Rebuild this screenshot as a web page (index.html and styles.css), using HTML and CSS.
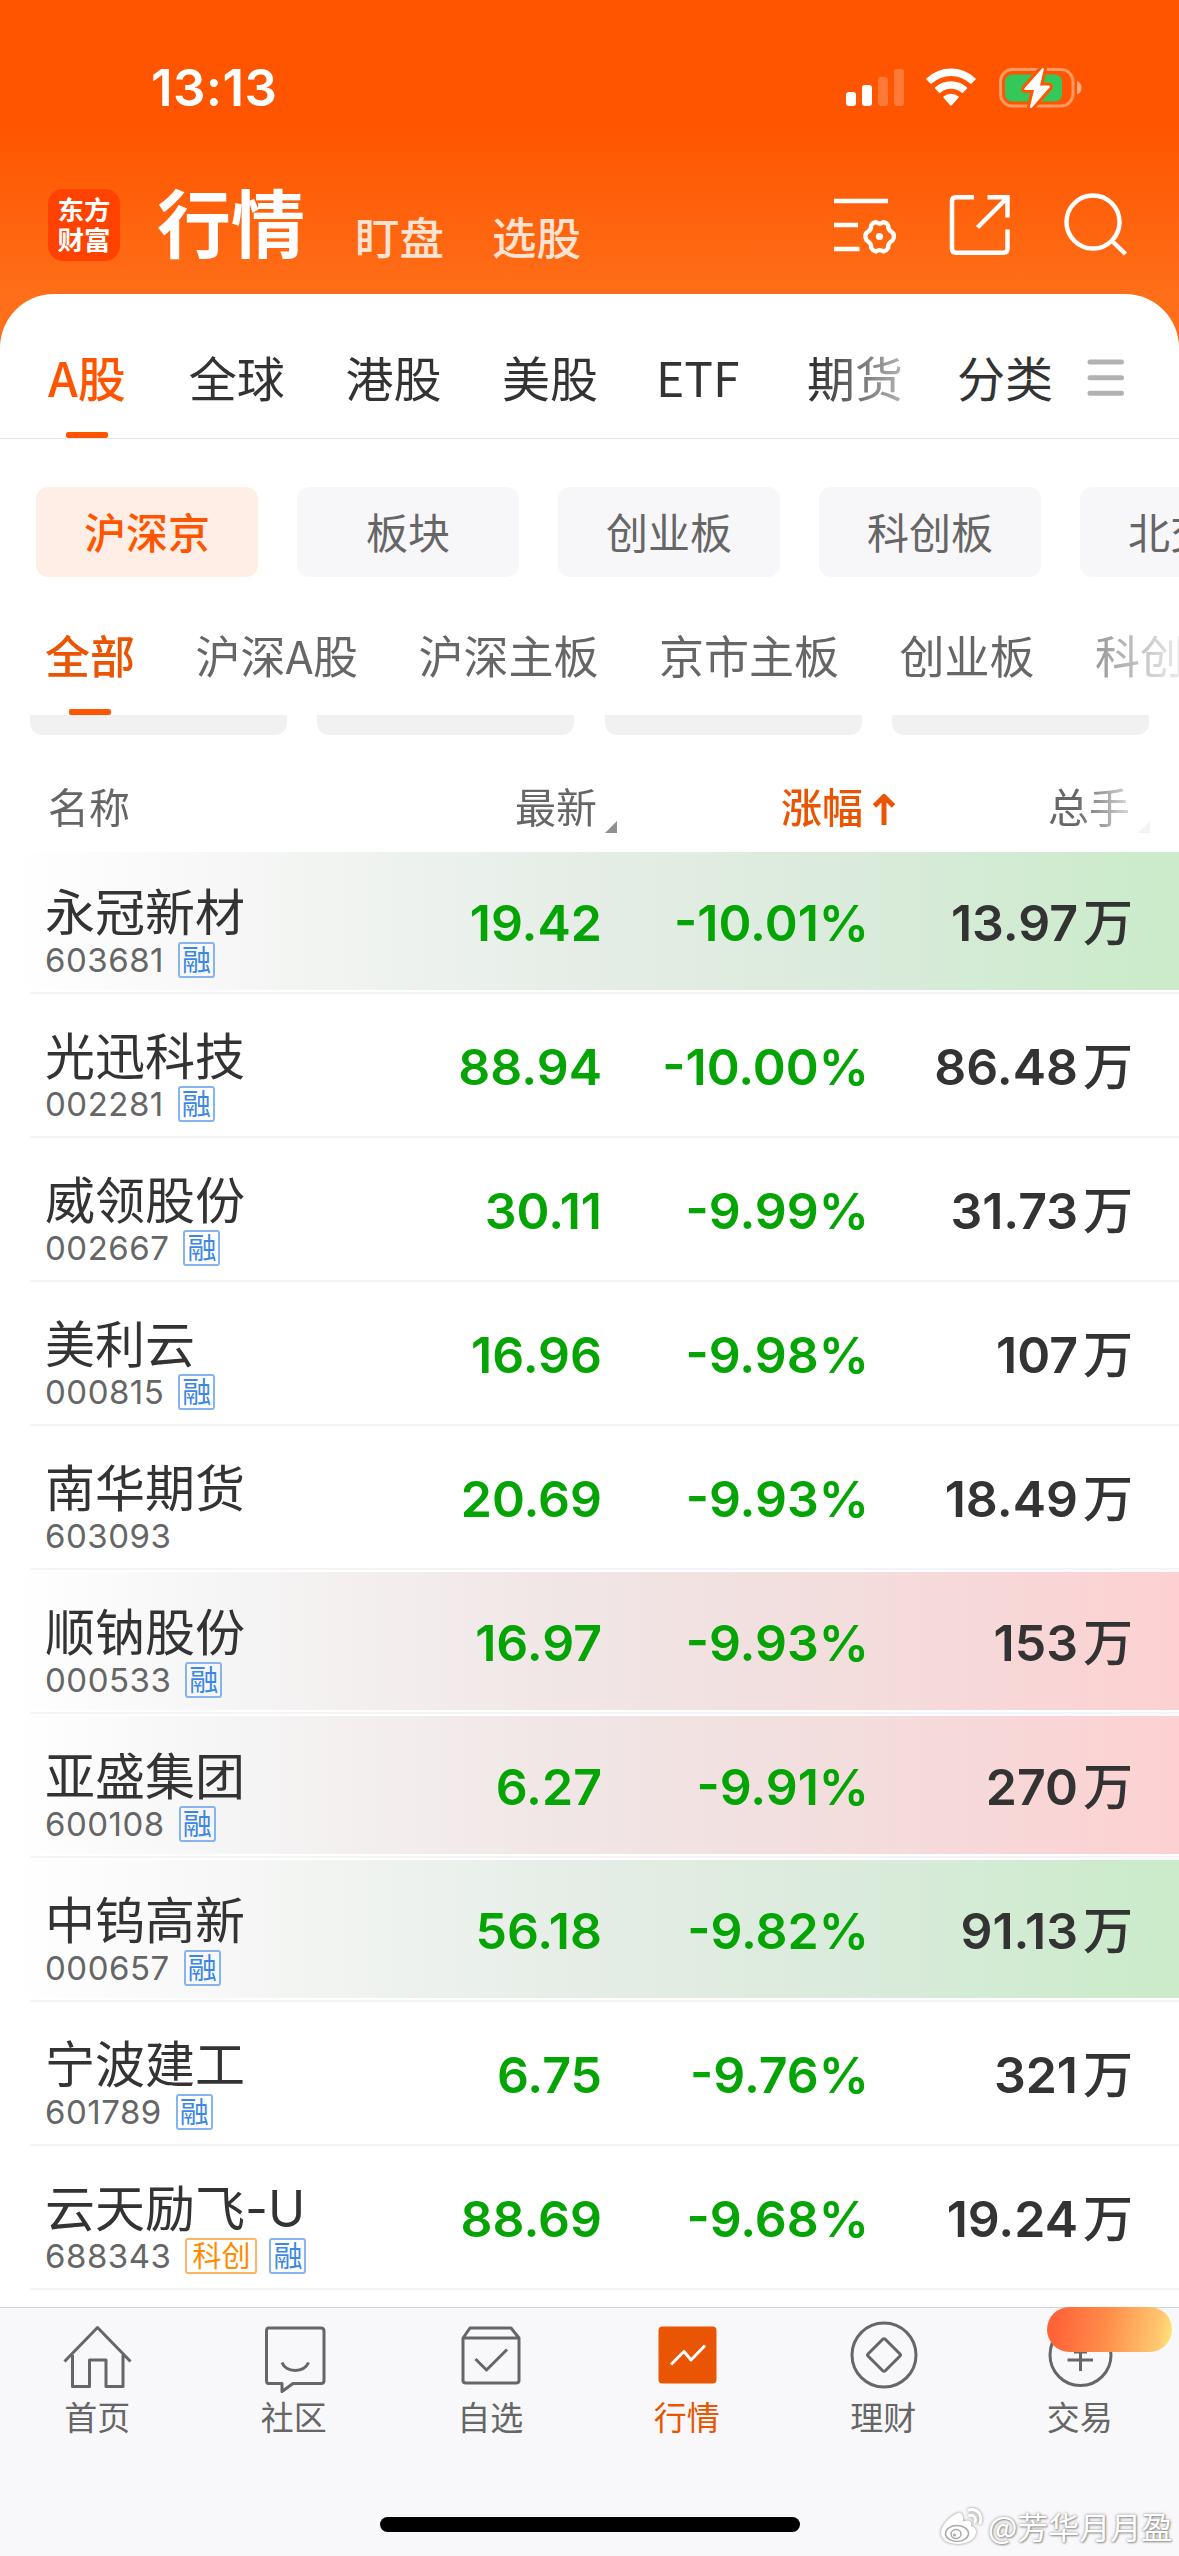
FILE: index.html
```html
<!DOCTYPE html>
<html lang="zh-CN">
<head>
<meta charset="utf-8">
<title>行情</title>
<link rel="stylesheet" href="styles.css">
</head>
<body>
<div class="app">
  <header class="top">
    <div class="status">
      <span class="time">13:13</span>
      <svg class="signal" width="60" height="40" viewBox="0 0 60 40" fill="#fff">
        <rect x="1" y="24" width="10" height="14" rx="3"/>
        <rect x="17" y="17" width="10" height="21" rx="3"/>
        <rect x="33" y="9" width="10" height="29" rx="3" opacity=".22"/>
        <rect x="49" y="1" width="10" height="37" rx="3" opacity=".22"/>
      </svg>
      <svg class="wifi" width="52" height="40" viewBox="0 0 52 40" fill="#fff">
        <path d="M1.500 11.500Q1 10.800 1.700 10.200A35.500 35.500 0 0 1 50.300 10.200Q51 10.800 50.500 11.500L46.600 15.500Q46 16 45.300 15.500A28.500 28.500 0 0 0 6.700 15.500Q6 16 5.400 15.500Z"/>
        <path d="M10 20.500Q9.500 20 10.200 19.300A23.500 23.500 0 0 1 41.800 19.300Q42.500 20 42 20.500L38 24.800Q37.300 25.300 36.700 24.800A16.500 16.500 0 0 0 15.300 24.800Q14.700 25.300 14 24.800Z"/>
        <path d="M18.300 29.500Q17.800 29 18.500 28.400A12 12 0 0 1 33.500 28.400Q34.200 29 33.700 29.500L26.800 37.200Q26 38 25.200 37.200Z"/>
      </svg>
      <svg class="battery" width="84" height="44" viewBox="0 0 84 44">
        <rect x="1.500" y="3.500" width="72.500" height="36.500" rx="12" fill="none" stroke="#fff" stroke-opacity=".4" stroke-width="3"/>
        <path d="M78 15v13.500c3-1 4.500-3.500 4.500-6.700S81 16 78 15Z" fill="#fff" fill-opacity=".5"/>
        <rect x="6" y="8.500" width="57" height="27" rx="7" fill="#34c759"/>
        <path d="M43 2.500L25.500 22.300Q24.500 24 26.500 24H35L31 40.500Q31 43 33 41.500L50.500 21.500Q51.500 19.500 49.500 19.500H41L44.800 3.500Q44.800 1 43 2.500Z" fill="#fff" stroke="#ff5602" stroke-width="6" paint-order="stroke"/>
      </svg>
    </div>
    <div class="titlebar">
      <div class="logo"><span>东方</span><span>财富</span></div>
      <h1 class="title">行情</h1>
      <span class="subtitle">盯盘</span>
      <span class="subtitle">选股</span>
      <div class="tools">
        <svg width="66" height="64" viewBox="0 0 66 64" fill="none" stroke="#fff" stroke-width="4.500">
          <path d="M2 8H56M2 32H26M2 56H27.500"/>
          <path d="M43 28.500Q47 31.500 51 28.500Q54.500 29 56 32Q55.500 36.500 59.500 38.800Q62.500 40.500 62 44Q61.500 48 59 49Q55.500 51.500 56 55.500Q54.500 58.500 51 59.500Q47 56.500 43 59.500Q39.500 58.500 38 55.500Q38.500 51.500 35 49Q32.500 48 32 44Q31.500 40.500 34.500 38.800Q38.500 36.500 38 32Q39.500 29 43 28.500Z" transform="translate(3 2) scale(.95)" stroke-linejoin="round"/>
          <circle cx="47.500" cy="43.500" r="3.600" fill="#fff" stroke="none"/>
        </svg>
        <svg width="66" height="64" viewBox="0 0 66 64" fill="none" stroke="#fff" stroke-width="4.500">
          <path d="M27 4.300H9Q5 4.300 5 8.300V55.700Q5 59.700 9 59.700H56.500Q60.500 59.700 60.500 55.700V36.500"/>
          <path d="M40.500 4.300H60.500V24.500M60 5L30.500 34.500"/>
        </svg>
        <svg width="66" height="64" viewBox="0 0 66 64" fill="none" stroke="#fff" stroke-width="4.500">
          <circle cx="31" cy="29" r="26.500"/>
          <path d="M50 48L63.500 61"/>
        </svg>
      </div>
    </div>
  </header>

  <main class="panel">
    <nav class="markets">
      <div class="market-scroll">
        <span class="market active">A股</span>
        <span class="market">全球</span>
        <span class="market">港股</span>
        <span class="market">美股</span>
        <span class="market latin">ETF</span>
        <span class="market">期货</span>
      </div>
      <span class="category">分类</span>
      <svg class="menu" width="38" height="40" viewBox="0 0 38 40" stroke="#b2b2b2" stroke-width="5" stroke-linecap="round"><path d="M3 4H34.500M3 19.700H34.500M3 35.300H34.500"/></svg>
    </nav>

    <div class="chips">
      <span class="chip active">沪深京</span>
      <span class="chip">板块</span>
      <span class="chip">创业板</span>
      <span class="chip">科创板</span>
      <span class="chip">北交所</span>
    </div>

    <nav class="boards">
      <span class="board active">全部</span>
      <span class="board">沪深A股</span>
      <span class="board">沪深主板</span>
      <span class="board">京市主板</span>
      <span class="board">创业板</span>
      <span class="board">科创板</span>
    </nav>

    <div class="cards"><i></i><i></i><i></i><i></i></div>

    <section class="quotes">
      <div class="cols head">
        <span class="h-name">名称</span>
        <span class="h-num">最新<svg class="tri" width="12" height="12" viewBox="0 0 12 12"><path d="M12 0V12H0Z" fill="#8e8e93"/></svg></span>
        <span class="h-num sorted">涨幅<svg class="arrow" width="22" height="32" viewBox="0 0 22 32" fill="none" stroke="#ea5504" stroke-width="5"><path d="M11 32V4M1.500 13L11 3.500L20.500 13" stroke-linejoin="round"/></svg></span>
        <span class="h-num last">总手<svg class="tri" width="12" height="12" viewBox="0 0 12 12"><path d="M12 0V12H0Z" fill="#8e8e93"/></svg></span>
      </div>

      <div class="row fall"><div class="cols">
        <div class="stock"><div class="name">永冠新材</div><div class="code">603681<b class="tag">融</b></div></div>
        <span class="num">19.42</span><span class="num">-10.01%</span><span class="vol">13.97<em>万</em></span>
      </div></div>
      <div class="row"><div class="cols">
        <div class="stock"><div class="name">光迅科技</div><div class="code">002281<b class="tag">融</b></div></div>
        <span class="num">88.94</span><span class="num">-10.00%</span><span class="vol">86.48<em>万</em></span>
      </div></div>
      <div class="row"><div class="cols">
        <div class="stock"><div class="name">威领股份</div><div class="code">002667<b class="tag">融</b></div></div>
        <span class="num">30.11</span><span class="num">-9.99%</span><span class="vol">31.73<em>万</em></span>
      </div></div>
      <div class="row"><div class="cols">
        <div class="stock"><div class="name">美利云</div><div class="code">000815<b class="tag">融</b></div></div>
        <span class="num">16.96</span><span class="num">-9.98%</span><span class="vol">107<em>万</em></span>
      </div></div>
      <div class="row"><div class="cols">
        <div class="stock"><div class="name">南华期货</div><div class="code">603093</div></div>
        <span class="num">20.69</span><span class="num">-9.93%</span><span class="vol">18.49<em>万</em></span>
      </div></div>
      <div class="row rise"><div class="cols">
        <div class="stock"><div class="name">顺钠股份</div><div class="code">000533<b class="tag">融</b></div></div>
        <span class="num">16.97</span><span class="num">-9.93%</span><span class="vol">153<em>万</em></span>
      </div></div>
      <div class="row rise"><div class="cols">
        <div class="stock"><div class="name">亚盛集团</div><div class="code">600108<b class="tag">融</b></div></div>
        <span class="num">6.27</span><span class="num">-9.91%</span><span class="vol">270<em>万</em></span>
      </div></div>
      <div class="row fall"><div class="cols">
        <div class="stock"><div class="name">中钨高新</div><div class="code">000657<b class="tag">融</b></div></div>
        <span class="num">56.18</span><span class="num">-9.82%</span><span class="vol">91.13<em>万</em></span>
      </div></div>
      <div class="row"><div class="cols">
        <div class="stock"><div class="name">宁波建工</div><div class="code">601789<b class="tag">融</b></div></div>
        <span class="num">6.75</span><span class="num">-9.76%</span><span class="vol">321<em>万</em></span>
      </div></div>
      <div class="row"><div class="cols">
        <div class="stock"><div class="name">云天励飞-U</div><div class="code">688343<b class="tag star">科创</b><b class="tag">融</b></div></div>
        <span class="num">88.69</span><span class="num">-9.68%</span><span class="vol">19.24<em>万</em></span>
      </div></div>
    </section>
  </main>

  <footer class="tabbar">
    <nav class="tabs">
      <a class="tab"><svg width="72" height="72" viewBox="0 0 72 72"><path d="M3.500 42.500L36.500 8.500L69.500 42.500M11.500 36V67.500H28.500V41H45V67.500H62V36"/></svg>首页</a>
      <a class="tab"><svg width="72" height="72" viewBox="0 0 72 72"><path d="M10.500 9H63Q66 9 66 12V61.500Q66 64.500 63 64.500H35L24 72.500V64.500H10.500Q8.500 64.500 8.500 61.500V12Q8.500 9 10.500 9Z"/><path d="M24 43.500C28 54 46 54 50.500 43.500"/></svg>社区</a>
      <a class="tab"><svg width="72" height="72" viewBox="0 0 72 72"><path d="M9 19L16 9H57L65 19V61.500Q65 64 62 64H12Q9 64 9 61.500ZM9 19H65M21.500 40L32.500 51L53 30.500"/></svg>自选</a>
      <a class="tab active"><svg width="72" height="72" viewBox="0 0 72 72"><rect class="fill" x="7.500" y="7.500" width="58" height="57" rx="4"/><path class="line" d="M20 45.500L33 32.500L40 41L54 26.500"/></svg>行情</a>
      <a class="tab"><svg width="72" height="72" viewBox="0 0 72 72"><circle cx="37" cy="36" r="32"/><path d="M35.500 20.500Q37 19 38.500 20.500L53 35Q54 36 53 37L38.500 51.500Q37 53 35.500 51.500L21 37Q20 36 21 35Z"/></svg>理财</a>
      <a class="tab"><svg width="72" height="72" viewBox="0 0 72 72"><circle cx="36.500" cy="36" r="30.500"/><path d="M23.500 41H49M30 33H43M36.500 32V52"/></svg>交易</a>
    </nav>
    <div class="promo"></div>
    <div class="home-indicator"></div>
    <div class="watermark">
      <svg width="44" height="38" viewBox="0 0 44 38">
        <path fill="#fff" d="M18 6C10 9 1 18 1 26C1 33 9 37 18 37C29 37 36 31 36 25C36 21 33 19.500 31 19C32 15 30 12 23 14.500C24 10 22 5 18 6Z"/>
        <path fill="none" stroke="#fff" stroke-width="3" stroke-linecap="round" d="M29 3C37 1 43 8 40 16M29.500 8.500C33.500 7.500 36.500 11 35 15"/>
        <ellipse cx="17" cy="26.500" rx="11.500" ry="8" fill="none" stroke="#aaa" stroke-width="1.500"/>
        <ellipse cx="16" cy="27" rx="5" ry="4.500" fill="#fff" stroke="#aaa" stroke-width="1.500"/>
        <circle cx="14.500" cy="28" r="1.500" fill="#aaa"/>
      </svg>
      <span>@芳华月月盈</span>
    </div>
  </footer>
</div>
</body>
</html>
```
FILE: styles.css
```css
* { box-sizing: border-box; }

body {
  margin: 0;
  background: #fff;
  color: #333;
  font-family: Inter, "Noto Sans CJK SC", sans-serif;
}

.app {
  width: 1179px;
  height: 2556px;
  display: flex;
  flex-direction: column;
  overflow: hidden;
  background: linear-gradient(#ff5500 0, #ff5500 125px, #ff6e18 294px, #ff7019 360px);
}

/* status bar and title */
.top { height: 294px; color: #fff; }

.status {
  height: 176px;
  display: flex;
  align-items: center;
  padding-left: 151px;
}
.time {
  width: 694px;
  font-size: 51px;
  font-weight: 600;
  line-height: 60px;
  letter-spacing: .4px;
}
.signal { margin-right: 20px; }
.wifi { margin-right: 22px; }

.titlebar {
  height: 98px;
  display: flex;
  align-items: center;
  padding: 0 51px 0 48px;
}
.logo {
  width: 72px;
  height: 72px;
  border-radius: 15px;
  background: #ff4200;
  display: flex;
  flex-direction: column;
  align-items: center;
  justify-content: center;
  font-size: 26.500px;
  font-weight: 700;
  line-height: 30px;
}
.title {
  margin: 0 50px 0 37px;
  font-size: 74px;
  font-weight: 700;
  line-height: 90px;
}
.subtitle {
  margin: 28px 48px 0 0;
  font-size: 44.500px;
  font-weight: 500;
  line-height: 54px;
  color: #ffe2d2;
}
.tools {
  margin-left: auto;
  display: flex;
  gap: 49px;
}

/* market navigation */
.panel {
  height: 2013px;
  background: #fff;
  border-radius: 54px 54px 0 0;
  overflow: hidden;
}
.markets {
  height: 145px;
  display: flex;
  border-bottom: 1.500px solid #e4e4e6;
  font-family: "Noto Sans CJK SC", sans-serif;
  font-size: 48px;
  line-height: 122px;
}
.market-scroll {
  width: 957px;
  padding-left: 48px;
  display: flex;
  gap: 60.500px;
  -webkit-mask-image: linear-gradient(to right, #000 815px, transparent 955px);
  mask-image: linear-gradient(to right, #000 815px, transparent 955px);
}
.market, .category { padding-top: 20.500px; white-space: nowrap; }
.market.active {
  margin-right: 2.500px;
  font-weight: 500;
  color: #ff5500;
  display: flex;
  flex-direction: column;
  align-items: center;
}
.market.latin { margin: 0 7px 0 -2.500px; }
.market.active::after, .board.active::after {
  content: "";
  width: 42px;
  height: 6px;
  margin-top: -4.500px;
  border-radius: 2px;
  background: #ff5500;
}
.menu { margin: 63.500px 0 0 34px; }

.chips {
  display: flex;
  gap: 39px;
  padding: 48px 0 0 36px;
}
.chip {
  flex: none;
  width: 222px;
  height: 90px;
  border-radius: 12px;
  background: #f7f7fa;
  color: #666;
  font-size: 42px;
  line-height: 93px;
  text-align: center;
}
.chip.active { background: #ffeee5; color: #ff5500; font-weight: 500; }

.boards {
  height: 138px;
  padding: 24px 0 0 45px;
  display: flex;
  gap: 60.500px;
  font-size: 45px;
  line-height: 114px;
  color: #666;
  white-space: nowrap;
  -webkit-mask-image: linear-gradient(to right, #000 1045px, transparent 1200px);
  mask-image: linear-gradient(to right, #000 1045px, transparent 1200px);
}
.board { font-family: "Noto Sans CJK SC", sans-serif; margin-top: -3px; }
.board.active {
  font-weight: 500;
  color: #ea5504;
  display: flex;
  flex-direction: column;
  align-items: center;
}
.board.active::after { margin-top: -3px; }

.cards {
  display: flex;
  gap: 30.500px;
  padding: 0 30px;
}
.cards i {
  flex: 1;
  height: 20px;
  border-radius: 0 0 12px 12px;
  background: #f1f1f1;
}

/* quote table */
.cols {
  display: grid;
  grid-template-columns: 301px 256px 267px 264px;
  padding-left: 45px;
}
.head {
  height: 117px;
  padding-top: 28px;
  font-size: 41px;
  line-height: 90px;
  color: #666;
  -webkit-mask-image: linear-gradient(to right, #000 1075px, rgba(0,0,0,.1) 1140px);
  mask-image: linear-gradient(to right, #000 1075px, rgba(0,0,0,.1) 1140px);
}
.h-name { padding-left: 3px; }
.h-num { display: flex; justify-content: flex-end; margin-right: -15px; }
.h-num.last { margin-right: -17px; }
.h-num.sorted { margin-right: -26px; color: #ea5504; font-weight: 500; }
.tri { margin: 58px 0 0 8px; }
.arrow { margin: 30px 0 0 10px; }

.row { height: 144px; }
.row .cols { height: 138px; align-items: center; }
.row::after {
  content: "";
  display: block;
  height: 2px;
  margin: 2px 0 0 30px;
  background: #f4f4f6;
}
.row.fall .cols {
  background: linear-gradient(to right, #fff 12px, #f5f6f5 250px, #e5ede6 590px, #daebdb 850px, #cbebcb 1160px);
}
.row.rise .cols {
  background: linear-gradient(to right, #fff 12px, #f5f4f4 250px, #f1e6e6 560px, #f3dddd 850px, #fdd1d1 1170px);
}

.stock { align-self: start; padding-top: 33px; }
.name {
  height: 57px;
  font-size: 50px;
  line-height: 56px;
  white-space: nowrap;
}
.code {
  height: 36px;
  display: flex;
  align-items: center;
  font-size: 33px;
  letter-spacing: .5px;
  color: #666;
}
.tag {
  height: 36px;
  margin-left: 14px;
  padding: 0 2px;
  border: 2px solid #86b4ee;
  border-radius: 3px;
  font-size: 29px;
  font-weight: 400;
  line-height: 33px;
  letter-spacing: 0;
  color: #3c87e4;
}
.tag.star { border-color: #ffb566; color: #ff8c00; padding: 0 5px; }
.tag + .tag { margin-left: 12px; }

.num, .vol {
  font-size: 50px;
  font-weight: 600;
  line-height: 60px;
  text-align: right;
  padding-top: 4px;
}
.num { color: #04a404; }
.vol em { margin-left: 5px; font-style: normal; font-weight: 500; }

/* bottom bar */
.tabbar {
  position: relative;
  height: 249px;
  border-top: 1px solid #d0d4d9;
  background: #f8f8fa;
}
.tabs {
  height: 209px;
  display: grid;
  grid-template-columns: repeat(6, 196.500px);
  padding-top: 11px;
  margin-left: -1px;
}
.tab {
  display: flex;
  flex-direction: column;
  align-items: center;
  font-size: 33px;
  line-height: 54px;
  color: #666;
}
.tab svg {
  overflow: visible;
  fill: none;
  stroke: #666;
  stroke-width: 3;
  stroke-linejoin: round;
}
.tab.active { color: #ea5504; }
.tab .fill { fill: #ea5504; stroke: none; }
.tab .line { stroke: #fff; }
.home-indicator {
  width: 420px;
  height: 15px;
  margin: 0 auto;
  border-radius: 8px;
  background: #000;
}
.promo {
  position: absolute;
  left: 1047px;
  top: -1px;
  width: 125px;
  height: 45px;
  border-radius: 23px;
  background: linear-gradient(100deg, #ff6338 8%, #ff8a48 45%, #ffc870 88%, #ffe978 100%);
}
.watermark {
  position: absolute;
  left: 940px;
  top: 198px;
  display: flex;
  align-items: center;
  gap: 4px;
  color: #fff;
  font-size: 31px;
  line-height: 40px;
  white-space: nowrap;
  text-shadow: 0 0 3px #888, 1px 1px 2px #999;
}
.watermark svg { overflow: visible; filter: drop-shadow(0 0 1.500px #888); }
.watermark span { font-family: "Noto Sans CJK SC", sans-serif; }
```
